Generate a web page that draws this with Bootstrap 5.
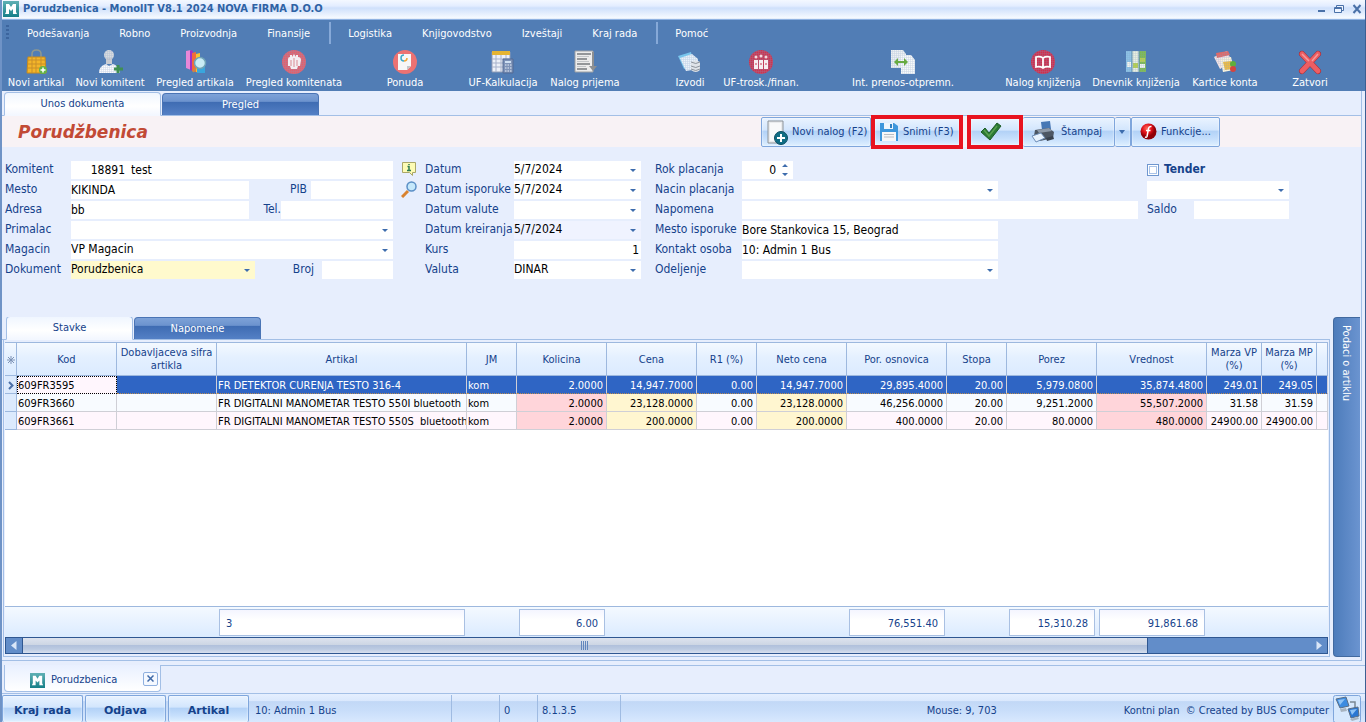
<!DOCTYPE html>
<html lang="sr">
<head>
<meta charset="utf-8">
<meta name="viewport" content="width=device-width, initial-scale=1">
<title>Porudzbenica - MonolIT</title>
<link href="https://cdn.jsdelivr.net/npm/bootstrap@5.3.0/dist/css/bootstrap.min.css" rel="stylesheet">
<style>
:root{--ink:#15428b;--bar:#517db5;--pane:#e7eefd;--line:#a3bfe6}
body{font-family:"DejaVu Sans Condensed",Tahoma,"Open Sans",sans-serif;font-size:11px;line-height:14px;color:var(--ink);background:var(--pane);border-left:2px solid #6f93c6;border-right:1px solid #3c5f92;overflow:hidden}
button,input,select{font:inherit;color:inherit;border:0;border-radius:0}
button{background:none;padding:0}
.wide{font-family:"DejaVu Sans",sans-serif}
.titlebar{height:20px;padding:0 3px 3px 1px;gap:4px;background:linear-gradient(#f4f8ff 0,#e3edff 30%,#cfe0fb 40%,#f8fbff 92%,#8fb2e2 95%);color:#2f62a4}
.titlebar b{font-size:11px}
.menubar{height:26px;background:var(--bar);padding-left:4px}
.menubar a{color:#fff;text-decoration:none;padding:1px 15px 0}
.menubar i{width:2px;height:22px;background:#86a9d8;margin:0 2px 0 4px}
.grip{width:3px;height:16px;margin-right:3px;background:repeating-linear-gradient(#3c659e 0 2px,transparent 2px 4px)}
.toolbar{height:45px;background:var(--bar);display:grid;grid-template-columns:68fr 80fr 90fr 108fr 114fr 82fr 82fr 38fr 52fr 90fr 194fr 86fr 100fr 78fr 92fr 9fr}
.toolbar button{color:#fff;white-space:nowrap;display:flex;flex-direction:column;align-items:center;padding-top:3px;min-width:0}
.toolbar svg{width:26px;height:26px;margin-bottom:1px}
.tabs{border-bottom:1px solid var(--line);padding-left:2px;gap:1px;align-items:flex-end}
.tabs button{text-align:center;border-radius:4px 4px 0 0}
.tabs .on{background:linear-gradient(#f0f6ff,#fff 60%,#f3f7ff);border:1px solid var(--line);border-bottom-color:#f3f7ff;margin-bottom:-1px}
.tabs .off{color:#fff;background:linear-gradient(#7ea2d8 0,#6c93ce 35%,#3f6cb3 40%,#5480c5 100%);border:1px solid #4a74b5;border-bottom:0}
.tabs-main{height:25px}.tabs-main button{width:157px}.tabs-main .on{height:24px}.tabs-main .off{height:22px}
.tabs-sub{height:23px}.tabs-sub button{width:127px}.tabs-sub .on{height:24px}.tabs-sub .off{height:22px}
.headband{height:31px;background:#f8f2f5;padding-right:141px}
.headband h1{font-size:17px;line-height:20px;font-weight:700;font-style:italic;color:#c24a35;margin:0 auto 0 16px}
.act{height:30px;border:1px solid #7fa6dc;border-radius:2px;background:linear-gradient(#e9f3ff 0,#d3e6fd 42%,#b3d2f7 48%,#c6dffc 75%,#dff0ff 100%);box-shadow:inset 0 0 2px #fff;display:flex;align-items:center;gap:4px;white-space:nowrap;flex:none}
.act svg{flex:none}
.hot{border:4px solid #e8131f;height:34px;border-radius:0}
.b110{width:110px}.b92{width:92px}.b56{width:56px}.b16{width:16px}.b89{width:89px}
.fields{padding:14px 72px 0 3px;display:grid;grid-template-columns:388px 32px 216px 14px minmax(0,1fr) 142px;height:170px;align-content:start;font-size:12px}
.line{display:flex;height:20px;align-items:flex-start}
.line label{line-height:17px;white-space:nowrap;flex:none}
.line input,.line select{height:18px;background-color:#fff;color:#000;padding:0 2px 1px 0;min-width:0;line-height:17px}
.line select,.line input[type=number]{appearance:none;-moz-appearance:textfield;background-repeat:no-repeat}
.line input::-webkit-inner-spin-button{display:none}
.line select{background-image:url("data:image/svg+xml,%3Csvg xmlns='http://www.w3.org/2000/svg' width='6' height='3'%3E%3Cpath d='M0 0h6L3 3z' fill='%233d6cad'/%3E%3C/svg%3E");background-position:right 5px top 8px}
.line input[type=number]{padding-right:17px;background-image:url("data:image/svg+xml,%3Csvg xmlns='http://www.w3.org/2000/svg' width='6' height='12'%3E%3Cpath d='M0 3h6L3 0zM0 9h6L3 12z' fill='%233d6cad'/%3E%3C/svg%3E");background-position:right 5px top 3px}
.l1{width:66px}.l2{width:89px}.l3{width:87px}.w178{width:178px}.w184{width:184px}.w256{width:256px}
.w396{width:396px}.w112{width:112px}.w95{width:95px}.w82{width:82px}.w71{width:71px}.w56{width:56px}.w51{width:51px}
.line .soft{background-color:#f0f3ff}.line .sun{background-color:#fffacd}
.tick{appearance:none;width:12px;height:12px!important;margin:3px 5px 0 0;border:1px solid #6f97cf!important;box-shadow:inset 0 0 0 1px #fff,inset 0 0 0 2px #a9c3e8;padding:0!important}
.gridbox{border:1px solid var(--line);border-top:0;padding:2px 1px 2px 1px;margin-left:1px;min-width:0}
.sheet{table-layout:fixed;width:100%;border-collapse:separate;border-spacing:0;line-height:13px}
.sheet th{height:34px;padding:0;font-weight:400;text-align:center;vertical-align:middle;border-right:1px solid #9db8de;border-bottom:1px solid #9db8de;background:linear-gradient(#f4f9ff,#e4f0ff 45%,#dbebff)}
.sheet thead th{border-top:1px solid #9db8de}
.sheet td{height:18px;padding:1px 3px 0 1px;white-space:nowrap;overflow:hidden;color:#000;border-right:1px solid #cfcfd6;border-bottom:1px solid #cfcfd6;background:#f8fbff}
.sheet tr.alt td{background:#fff6fd}
.sheet tr.sel td{background:#2f65c4;color:#fff;border-bottom:1px dotted #b98c52}
.sheet tr.sel td.focus{background:#fff6fd;color:#000;outline:1px dotted #000;outline-offset:-1px}
.sheet tbody th{height:18px;border-right:1px solid #9db8de;background:#dceafd}
.sheet tr td.pk{background:#ffd5da}.sheet tr td.yl{background:#fff6d0}
.sheet tr.sel td.pk,.sheet tr.sel td.yl{background:#2f65c4}
.num{text-align:right}
.c12{width:12px}.c100{width:100px}.c250{width:250px}.c50{width:50px}.c90{width:90px}.c60{width:60px}.c110{width:110px}.c55{width:55px}
.blank{background:#fff;flex:1 1 auto;min-height:40px}
.sums{background:linear-gradient(#f4f9ff,#dbebff);border-top:1px solid #9db8de}
.sums td{height:30px;padding:2px 2px 1px 2px;background:none;border:0}
.sums output{display:block;height:27px;line-height:27px;border:1px solid #a9c0e2;background:linear-gradient(#f4f5ff,#fff 40%);padding:0 6px;color:var(--ink)}
.scroll{height:17px;background:#628dc9;border:1px solid #2f5791}
.scroll button{width:16px;line-height:0;padding:0}
.thumb{background:linear-gradient(#dde3ee 0,#cdd6e4 45%,#b1c1dc 50%,#bccbe2 75%,#d7dfee);border:0 solid #2f5791;border-width:0 1px;flex:0 1 1126px}
.thumb i{width:8px;height:9px;background:repeating-linear-gradient(90deg,#6186bd 0 1px,transparent 1px 2px)}
.sidetab{width:28px;border-radius:4px 0 0 4px;background:linear-gradient(90deg,#4d7cbb,#6b94d0);border:1px solid #41699f;border-right:0;color:#fff;writing-mode:vertical-rl;text-align:left;padding:7px 7px 7px 5px;margin:0 1px 0 3px}
.workspace{border-right:1px solid var(--line);border-bottom:1px solid var(--line);margin-right:3px;padding-bottom:3px}
.docs{height:33px;border-bottom:1px solid var(--line);padding-left:2px;padding-top:4px}
.docs>div{border:1px solid var(--line);border-top:0;border-radius:0 0 4px 4px;width:157px;height:27px;background:linear-gradient(#e9f0ff,#fff);padding:4px 0 0 25px;gap:6px}
.docs>span{border-top:1px solid var(--line);flex:1}
.closer{width:15px;height:14px;border:1px solid #8fb0df;border-radius:2px;margin:0 2px 3px auto;line-height:0;background:#f4f8ff}
.statusbar{height:28px;background:linear-gradient(#e5efff 0,#dae8fd 25%,#c2d8f6 27%,#c9defa 60%,#d8e8fe);white-space:nowrap}
.statusbar .act{width:81px;height:27px;justify-content:center;font-weight:700;border-bottom:0;align-self:flex-end;margin-right:2px;padding-top:3px}
.statusbar>span{height:27px;line-height:31px}
.statusbar .cell{padding-left:4px;border-right:1px solid #9fbbe2;flex:none}
.k1{width:201px}.k2{width:48px}.k3{width:38px}.k4{width:83px}
.mouse{padding-right:127px}
</style>
</head>
<body class="d-flex flex-column vh-100">
<svg width="0" height="0" class="position-absolute" aria-hidden="true"><defs>
<pattern id="mesh" width="2" height="2" patternUnits="userSpaceOnUse"><path d="M0 0h2M0 0v2" stroke="#7f9cc6" stroke-width="1" opacity=".38"/></pattern>
<linearGradient id="teal" x2="0" y2="1"><stop stop-color="#5fb0b4"/><stop offset="1" stop-color="#167f88"/></linearGradient>
<radialGradient id="redball" cx=".4" cy=".3"><stop stop-color="#ff6a5a"/><stop offset=".6" stop-color="#e0101a"/><stop offset="1" stop-color="#8f0008"/></radialGradient>
<symbol id="logo" viewBox="0 0 16 16"><path d="M0 0h16v16H0z" fill="url(#teal)"/><path d="M3 3h3l2 3 2-3h3v8l1 2h-4V8L8 10 6 8v5H2l1-2z" fill="#fff"/></symbol>
</defs></svg>

<header class="flex-shrink-0">
<div class="titlebar d-flex align-items-center">
<svg width="16" height="16"><use href="#logo"/></svg>
<b class="flex-grow-1">Porudzbenica - MonolIT V8.1 2024 NOVA FIRMA D.O.O</b>
<span class="d-flex gap-2 align-items-center">
<button type="button" aria-label="Minimize" class="d-flex"><svg width="10" height="10"><path d="M2 7h7" stroke="#4a71a8" stroke-width="2"/></svg></button>
<button type="button" aria-label="Restore" class="d-flex"><svg width="10" height="10" fill="#eef4ff" stroke="#4a71a8"><path d="M2.500 1.500h7v5h-7z"/><path d="M.5 3.500h7v5h-7zM.5 4.500h7"/></svg></button>
<button type="button" aria-label="Close" class="d-flex"><svg width="10" height="10"><path d="M1.500 1l7 8M8.500 1l-7 8" stroke="#4a71a8" stroke-width="2"/></svg></button>
</span></div>

<nav class="menubar d-flex align-items-center">
<span class="grip"></span>
<a href="#">Podešavanja</a><a href="#">Robno</a><a href="#">Proizvodnja</a><a href="#">Finansije</a><i></i>
<a href="#">Logistika</a><a href="#">Knjigovodstvo</a><a href="#">Izveštaji</a><a href="#">Kraj rada</a><i></i><a href="#">Pomoć</a>
</nav>

<div class="toolbar">
<button type="button"><svg viewBox="0 0 26 26"><path d="M9 9V5q0-4 4.500-4T18 5v4" fill="none" stroke="#8f9890" stroke-width="1.500"/><path d="M5 8h17l1 16H4z" fill="#f3b529" stroke="#c78a1c"/><path d="M5 11h17M5 15h17M5 19h17M9 8v16M13 8v16M18 8v16" stroke="#c98f2b"/><circle cx="20" cy="21" r="4" fill="#63b345"/><path d="M20 18.500v5M17.500 21h5" stroke="#fff" stroke-width="1.500"/></svg>Novi artikal</button>
<button type="button"><svg viewBox="0 0 26 26"><circle cx="12" cy="6" r="5" fill="#d9dcdf"/><path d="M9 9h6v6H9z" fill="#c9ccd2"/><path d="M2 24q0-7 7-9l3 2 4-2q6 2 7 9z" fill="#fbfbfd"/><circle cx="12" cy="6" r="5" fill="url(#mesh)"/><path d="M2 24q0-7 7-9h7q6 2 7 9z" fill="url(#mesh)"/><path d="M21 16v8M17 20h9" stroke="#3f8f52" stroke-width="3"/></svg>Novi komitent</button>
<button type="button"><svg viewBox="0 0 26 26"><path d="M4 2l5-1v20l-5-2z" fill="#e887d8"/><path d="M8 1l3 1v20l-3-1z" fill="#a12fc4"/><path d="M10 4l4-1v20l-4-1z" fill="#f26a3a"/><path d="M14 5l4-1v20l-4-1z" fill="#f6c432"/><path d="M15 17h8v7h-8z" fill="#39a6dd"/><path d="M14 19l-3 4" stroke="#c58a4a" stroke-width="2"/><circle cx="18" cy="14" r="5.500" fill="#c9ecf5" stroke="#6fa3b7" stroke-width="1.500"/></svg>Pregled artikala</button>
<button type="button"><svg viewBox="0 0 26 26"><circle cx="13" cy="13" r="12" fill="#e2606c"/><circle cx="13" cy="13" r="12" fill="url(#mesh)"/><path d="M7 10q0-2 2-2v-2h2v2l2-3 2 3v-2h2v2q3 0 3 3l-1 6h-2l-1 3H10l-1-3H7z" fill="#f3eef2"/><path d="M13 9v9M10 11v6M16 11v6" stroke="#d98a94"/></svg>Pregled komitenata</button>
<button type="button"><svg viewBox="0 0 26 26"><circle cx="13" cy="13" r="12" fill="#ec7272"/><path d="M6 5h13v12l-4 4H6z" fill="#f7f7f7"/><path d="M19 17l-4 4v-4z" fill="#c3c7cb"/><path d="M12 6a3 3 0 0 0 0 6" fill="none" stroke="#3fa9c9" stroke-width="1.500"/><path d="M12 12a3 3 0 0 0 3-3" fill="none" stroke="#f0a63a" stroke-width="1.500"/></svg>Ponuda</button>
<button type="button"><svg viewBox="0 0 26 26"><path d="M2 3h18v20H2z" fill="#eef1f8" stroke="#8e9bb5"/><path d="M2 2h18v4H2z" fill="#e5b433"/><path d="M2 10h18M2 14h18M2 18h18M6 6v17M11 6v17M16 6v17" stroke="#a7b2cb"/><path d="M13 10h10v14H13z" fill="#7e93b8" stroke="#536b95"/><path d="M15 12h6v2h-6z" fill="#cfe0f3"/><path d="M15 16h7M15 19h7M15 22h7" stroke="#e7edf6" stroke-dasharray="1.500 1"/></svg>UF-Kalkulacija</button>
<button type="button"><svg viewBox="0 0 26 26"><path d="M3 2h18v21H3z" fill="#ececec" stroke="#9da0a3"/><path d="M5 5h14M5 10h10M5 15h13M5 20h10" stroke="#75797d" stroke-width="1.500"/><path d="M5 7.500h12M5 12.500h12M5 17.500h9" stroke="#c4c7ca"/><path d="M21 3v15" stroke="#8c8f92" stroke-width="2"/><path d="M17 17h8l-4 5z" fill="#8c8f92"/></svg>Nalog prijema</button>
<span></span>
<button type="button"><svg viewBox="0 0 26 26"><path d="M1 7l13-4 3 14-10 3z" fill="#79c5ec"/><path d="M3 9l12-4 6 5v10l-12 2z" fill="#eaf2f9"/><path d="M3 9l12-4 6 5v10l-12 2z" fill="url(#mesh)"/><path d="M14 13q5-3 9 0v8q-4 4-9 0z" fill="#dfe3e8"/><path d="M14 13q5 3 9 0M14 17q5 3 9 0M14 20q5 3 9 0" fill="none" stroke="#8e959d"/></svg>Izvodi</button>
<button type="button"><svg viewBox="0 0 26 26"><circle cx="13" cy="13" r="12" fill="#cb3550"/><circle cx="13" cy="13" r="12" fill="url(#mesh)"/><path d="M6 11h4v9H6zM11 11h4v9h-4zM16 11h4v9h-4z" fill="#f6edf0"/><circle cx="8" cy="8" r="1.500" fill="#f6d6dc"/><circle cx="13" cy="7" r="1.500" fill="#f6d6dc"/><circle cx="18" cy="8" r="1.500" fill="#f6d6dc"/><path d="M8 14v2M13 14v2M18 14v2" stroke="#cb3550"/></svg>UF-trosk./finan.</button>
<button type="button"><svg viewBox="0 0 26 26"><path d="M1 1h12l3 4v14H1z" fill="#eef1f3"/><path d="M11 6h10l4 5v14H11z" fill="#f8fafa"/><path d="M1 1h12l3 4v14H1zM11 6h10l4 5v14H11z" fill="url(#mesh)"/><path d="M4 13l4-4v3h6V9l4 4-4 4v-3H8v3z" fill="#68ab43"/></svg>Int. prenos-otpremn.</button>
<button type="button"><svg viewBox="0 0 26 26"><circle cx="13" cy="13" r="12" fill="#cf2f4c"/><circle cx="13" cy="13" r="12" fill="url(#mesh)"/><path d="M6 8q4-1 7 1 3-2 7-1v10q-4-1-7 1-3-2-7-1zM13 9v10" fill="none" stroke="#fff" stroke-width="1.800"/></svg>Nalog knjiženja</button>
<button type="button"><svg viewBox="0 0 26 26"><path d="M3 2h6v21H3z" fill="#8cc3e6"/><path d="M9 2h7v21H9z" fill="#eaf0df"/><path d="M16 2h7v21h-7z" fill="#7dbb4e"/><path d="M10 14h5v5h-5zM17 9h5v4h-5z" fill="#b8d24a"/><path d="M4 13h4v5H4zM17 15h5v4h-5z" fill="#f2f6ef"/><path d="M3 2h20v21H3z" fill="url(#mesh)"/><path d="M9 2v21M16 2v21" stroke="#5f8fae"/></svg>Dnevnik knjiženja</button>
<button type="button"><svg viewBox="0 0 26 26"><path d="M2 8l13-6 5 11-12 7z" fill="#f5e5e5"/><path d="M4 4l12-2 2 4L5 9z" fill="#df6a68"/><path d="M8 10l11-2 3 13-11 2z" fill="#fbf4dc"/><path d="M11 13l8-1 1 8-7 1z" fill="#f1bd3f"/><path d="M2 8l13-6 5 11 2 7-11 2z" fill="url(#mesh)"/><circle cx="21" cy="15" r="3" fill="#5fae3c"/><circle cx="21" cy="20" r="3" fill="#d3453f"/></svg>Kartice konta</button>
<button type="button"><svg viewBox="0 0 26 26"><path d="M5 5l16 17M21 5L5 22" stroke="#a92830" stroke-width="6" stroke-linecap="round"/><path d="M5 5l16 17M21 5L5 22" stroke="#ee5e63" stroke-width="5" stroke-linecap="round"/><path d="M5 5l7 7M21 5l-6 7" stroke="#f69a9c" stroke-width="1.500"/></svg>Zatvori</button>
</div>
</header>

<main class="workspace d-flex flex-column flex-grow-1">
<div class="tabs tabs-main d-flex"><button type="button" class="on">Unos dokumenta</button><button type="button" class="off">Pregled</button></div>
<div class="headband d-flex align-items-center">
<h1 class="wide">Porudžbenica</h1>
<button type="button" class="act b110 ps-1"><svg width="22" height="26" viewBox="0 0 22 26"><path d="M2 2h15v22H2z" fill="#e9ebed" stroke="#8b9299"/><path d="M4 4h11v18H4z" fill="#f8f9fa"/><circle cx="15" cy="19" r="6.500" fill="#0f6d84" stroke="#0a4d62"/><path d="M15 15v8M11 19h8" stroke="#fff" stroke-width="2"/></svg><span>Novi nalog (F2)</span></button>
<button type="button" class="act hot b92 ps-1"><svg width="20" height="20" viewBox="0 0 20 20"><path d="M1 1h14l4 3v15H1z" fill="#3e97dc"/><path d="M5 1h9v6H5z" fill="#eef6fd"/><path d="M11 2h2v4h-2z" fill="#2f7fc0"/><path d="M3 10h14v9H3z" fill="#f7f7f7"/><path d="M5 12.500h10M5 15h10" stroke="#b9bec3"/></svg><span>Snimi (F3)</span></button>
<button type="button" class="act hot b56 ms-1 ps-2" aria-label="Potvrdi"><svg width="24" height="20" viewBox="0 0 24 20"><path d="M2 10l4-4 4 5 8-10 4 3-11 14z" fill="#2b7a35" stroke="#1d5c25"/><path d="M5 8l5 6L18 4" fill="none" stroke="#59a04f" stroke-width="1.500"/></svg></button>
<button type="button" class="act b92 ps-2 border-start-0"><svg width="26" height="22" viewBox="0 0 26 22"><path d="M10 1l9-1 1 8-9 1z" fill="#4778b5"/><path d="M4 9l14-2 5 4-1 6-13 3-6-5z" fill="#4c5663"/><path d="M6 9l12-2 3 3-13 2z" fill="#8d99a8"/><path d="M1 15l9-3 4 5-9 4z" fill="#e8f2fd" stroke="#6f8fb8"/><path d="M15 17l7-2 1 3-7 2z" fill="#38414d"/></svg><span>Štampaj</span></button>
<button type="button" class="act b16 px-1 border-start-0" aria-label="Više"><svg width="6" height="4"><path d="M0 0h6L3 4z" fill="#3d6cad"/></svg></button>
<button type="button" class="act b89 ps-2"><svg width="17" height="17" viewBox="0 0 17 17"><circle cx="8.500" cy="8.500" r="8" fill="url(#redball)"/><path d="M11.500 3.500q-2.500-.5-3 2l-1.500 8q-.4 1-2 .6M6 7.500h4.500" stroke="#fff" stroke-width="1.500" fill="none"/></svg><span>Funkcije...</span></button>
</div>

<form class="fields">
<div>
<div class="line"><label class="l1" for="kom">Komitent</label><input id="kom" class="num w56" value="18891"><input aria-label="Naziv komitenta" class="flex-grow-1 ps-1" value="test"></div>
<div class="line"><label class="l1" for="mesto">Mesto</label><input id="mesto" class="w178" value="KIKINDA"><label class="ms-auto me-1" for="pib">PIB</label><input id="pib" class="w82"></div>
<div class="line"><label class="l1" for="adr">Adresa</label><input id="adr" class="w178" value="bb"><label class="ms-auto" for="tel">Tel.</label><input id="tel" class="w112"></div>
<div class="line"><label class="l1" for="prim">Primalac</label><select id="prim" class="flex-grow-1"><option></option></select></div>
<div class="line"><label class="l1" for="mag">Magacin</label><select id="mag" class="flex-grow-1"><option>VP Magacin</option></select></div>
<div class="line"><label class="l1" for="dok">Dokument</label><select id="dok" class="w184 sun"><option>Porudzbenica</option></select><label class="ms-auto me-2" for="broj">Broj</label><input id="broj" class="w71"></div>
</div>
<div class="d-flex flex-column ps-1 ms-1">
<button type="button" class="line" aria-label="Info"><svg width="16" height="16" viewBox="0 0 16 16"><path d="M1.500 1.500h13v10h-3v3l-3-3h-7z" fill="#fdfbb4" stroke="#aaa767"/><path d="M8 3v1M6.500 5.500H8v4M6 9.500h4" stroke="#2d7a4f" stroke-width="1.500" fill="none"/></svg></button>
<button type="button" class="line" aria-label="Traži"><svg width="16" height="17" viewBox="0 0 16 17"><path d="M1 16l6-6" stroke="#d9822f" stroke-width="3"/><circle cx="10.500" cy="5.500" r="4.500" fill="#c5e8fb" stroke="#5b8fc6" stroke-width="1.500"/></svg></button>
</div>
<div>
<div class="line"><label class="l2" for="d1">Datum</label><select id="d1" class="flex-grow-1"><option>5/7/2024</option></select></div>
<div class="line"><label class="l2" for="d2">Datum isporuke</label><select id="d2" class="flex-grow-1"><option>5/7/2024</option></select></div>
<div class="line"><label class="l2" for="d3">Datum valute</label><select id="d3" class="flex-grow-1"><option></option></select></div>
<div class="line"><label class="l2" for="d4">Datum kreiranja</label><select id="d4" class="flex-grow-1 soft"><option>5/7/2024</option></select></div>
<div class="line"><label class="l2" for="kurs">Kurs</label><input id="kurs" class="flex-grow-1 num" value="1"></div>
<div class="line"><label class="l2" for="val">Valuta</label><select id="val" class="flex-grow-1"><option>DINAR</option></select></div>
</div>
<span></span>
<div>
<div class="line"><label class="l3" for="rok">Rok placanja</label><input id="rok" type="number" class="num w51" value="0"></div>
<div class="line"><label class="l3" for="nac">Nacin placanja</label><select id="nac" class="w256"><option></option></select></div>
<div class="line"><label class="l3" for="nap">Napomena</label><input id="nap" class="w396"></div>
<div class="line"><label class="l3" for="isp">Mesto isporuke</label><input id="isp" class="w256" value="Bore Stankovica 15, Beograd"></div>
<div class="line"><label class="l3" for="kon">Kontakt osoba</label><input id="kon" class="w256" value="10: Admin 1 Bus"></div>
<div class="line"><label class="l3" for="ode">Odeljenje</label><select id="ode" class="w256"><option></option></select></div>
</div>
<div>
<div class="line"><input type="checkbox" id="tender" class="tick"><label for="tender"><b>Tender</b></label></div>
<div class="line"><select aria-label="Tender" class="flex-grow-1"><option></option></select></div>
<div class="line"><label for="saldo">Saldo</label><input id="saldo" class="ms-auto w95"></div>
</div>
</form>

<div class="d-flex flex-grow-1">
<section class="d-flex flex-column flex-grow-1 overflow-hidden">
<div class="tabs tabs-sub d-flex ps-1"><button type="button" class="on">Stavke</button><button type="button" class="off">Napomene</button></div>
<div class="gridbox d-flex flex-column flex-grow-1">
<table class="sheet">
<colgroup><col class="c12"><col class="c100"><col class="c100"><col class="c250"><col class="c50"><col class="c90"><col class="c90"><col class="c60"><col class="c90"><col class="c100"><col class="c60"><col class="c90"><col class="c110"><col class="c55"><col class="c55"><col></colgroup>
<thead><tr><th><svg width="8" height="8" viewBox="0 0 8 8"><path d="M4 0v8M0 4h8M1 1l6 6M7 1L1 7" stroke="#7d92b5"/></svg></th><th>Kod</th><th>Dobavljaceva sifra artikla</th><th>Artikal</th><th>JM</th><th>Kolicina</th><th>Cena</th><th>R1 (%)</th><th>Neto cena</th><th>Por. osnovica</th><th>Stopa</th><th>Porez</th><th>Vrednost</th><th>Marza VP (%)</th><th>Marza MP (%)</th><th></th></tr></thead>
<tbody>
<tr class="sel"><th><svg width="6" height="9" viewBox="0 0 6 9"><path d="M1 1l3.500 3.500L1 8" fill="none" stroke="#4a6fa8" stroke-width="2"/></svg></th><td class="focus">609FR3595</td><td></td><td>FR DETEKTOR CURENJA TESTO 316-4</td><td>kom</td><td class="num pk">2.0000</td><td class="num yl">14,947.7000</td><td class="num">0.00</td><td class="num yl">14,947.7000</td><td class="num">29,895.4000</td><td class="num">20.00</td><td class="num">5,979.0800</td><td class="num pk">35,874.4800</td><td class="num">249.01</td><td class="num">249.05</td><td></td></tr>
<tr><th></th><td>609FR3660</td><td></td><td>FR DIGITALNI MANOMETAR TESTO 550I bluetooth</td><td>kom</td><td class="num pk">2.0000</td><td class="num yl">23,128.0000</td><td class="num">0.00</td><td class="num yl">23,128.0000</td><td class="num">46,256.0000</td><td class="num">20.00</td><td class="num">9,251.2000</td><td class="num pk">55,507.2000</td><td class="num">31.58</td><td class="num">31.59</td><td></td></tr>
<tr class="alt"><th></th><td>609FR3661</td><td></td><td>FR DIGITALNI MANOMETAR TESTO 550S&nbsp; bluetooth</td><td>kom</td><td class="num pk">2.0000</td><td class="num yl">200.0000</td><td class="num">0.00</td><td class="num yl">200.0000</td><td class="num">400.0000</td><td class="num">20.00</td><td class="num">80.0000</td><td class="num pk">480.0000</td><td class="num">24900.00</td><td class="num">24900.00</td><td></td></tr>
</tbody></table>
<div class="blank"></div>
<table class="sheet sums">
<colgroup><col class="c12"><col class="c100"><col class="c100"><col class="c250"><col class="c50"><col class="c90"><col class="c90"><col class="c60"><col class="c90"><col class="c100"><col class="c60"><col class="c90"><col class="c110"><col class="c55"><col class="c55"><col></colgroup>
<tbody><tr><td></td><td></td><td></td><td><output>3</output></td><td></td><td class="num"><output>6.00</output></td><td></td><td></td><td></td><td class="num"><output>76,551.40</output></td><td></td><td class="num"><output>15,310.28</output></td><td class="num"><output>91,861.68</output></td><td></td><td></td><td></td></tr></tbody></table>
<div class="scroll d-flex"><button type="button" aria-label="Levo"><svg width="6" height="9"><path d="M5.500 0v9L0 4.500z" fill="#d9e6f8"/></svg></button><div class="thumb d-flex align-items-center justify-content-center"><i></i></div><button type="button" aria-label="Desno" class="ms-auto"><svg width="6" height="9"><path d="M.5 0v9L6 4.500z" fill="#d9e6f8"/></svg></button></div>
</div>
</section>
<button type="button" class="sidetab">Podaci o artiklu</button>
</div>
</main>

<footer class="flex-shrink-0">
<div class="docs d-flex"><div class="d-flex align-items-center"><svg width="15" height="15"><use href="#logo"/></svg><span>Porudzbenica</span><button type="button" class="closer" aria-label="Zatvori"><svg width="7" height="7"><path d="M.5.5l6 6M6.500.5l-6 6" stroke="#3f69a8" stroke-width="1.500"/></svg></button></div><span></span></div>
<div class="statusbar d-flex align-items-center">
<button type="button" class="act wide">Kraj rada</button><button type="button" class="act wide">Odjava</button><button type="button" class="act wide">Artikal</button>
<span class="cell k1">10: Admin 1 Bus</span><span class="cell k2"></span><span class="cell k3">0</span><span class="cell k4">8.1.3.5</span>
<span class="mouse ms-auto">Mouse: 9, 703</span>
<span class="pe-1">Kontni plan &nbsp;© Created by BUS Computer</span>
<button type="button" class="d-flex me-1" aria-label="Mreža"><svg width="28" height="27" viewBox="0 0 28 27"><rect x=".5" y=".5" width="27" height="27" rx="2" fill="#d6e8fd" stroke="#7fa6dc"/><path d="M17 7h5v6" fill="none" stroke="#7a8793" stroke-width="1.500"/><path d="M3 4l10-2 3 9-9 2z" fill="#3c8be0" stroke="#5c6f85"/><path d="M7 14l6-1 1 3-6 1z" fill="#a8b4c0"/><path d="M15 14l10-2 1 9-8 2z" fill="#2a76d2" stroke="#5c6f85"/><path d="M17 24l8-2 1 2-7 2z" fill="#a8b4c0"/><path d="M5 5l7-1-5 6zM17 15l7-1-5 6z" fill="#8fc3f5"/></svg></button>
</div>
</footer>
<script src="https://cdn.jsdelivr.net/npm/bootstrap@5.3.0/dist/js/bootstrap.bundle.min.js"></script>
</body>
</html>
